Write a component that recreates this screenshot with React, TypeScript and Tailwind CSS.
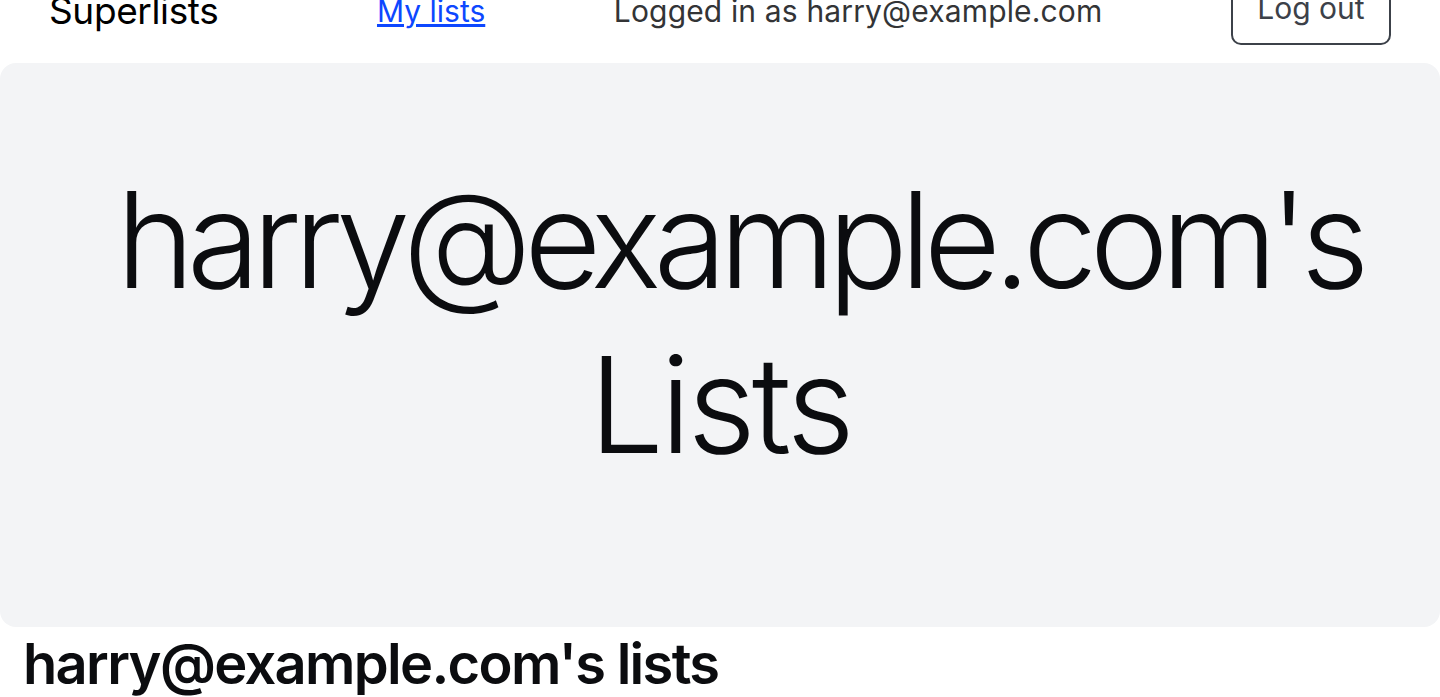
export default function App() {
  return (
    <div className="w-[1440px] h-[697px] overflow-hidden bg-white" style={{ fontFamily: "Inter, 'Noto Sans', sans-serif" }}>
      <div className="-mt-[41px]">
        <nav className="flex items-center justify-between pl-[49px] pr-[49px] h-[104px]">
          <span className="text-[37px] text-black tracking-[-0.01em]">Superlists</span>
          <a href="#" className="text-[30px] text-[#0d47ff] underline ml-[30px]">My lists</a>
          <span className="text-[30px] text-[#333436] tracking-[0.005em]">Logged in as harry@example.com</span>
          <button className="text-[30px] text-[#3c4149] border-2 border-[#3c4149] rounded-[10px] w-[160px] h-[74px] -mt-[6px]">Log out</button>
        </nav>
        <div className="bg-[#f3f4f6] rounded-[16px] h-[564px] flex flex-col justify-center pb-[46px]">
          <h1 className="text-center text-[133px] leading-[165px] font-light text-[#0b0c0f]">
            <span className="block pl-[38px] tracking-[-0.057em]">harry@example.com's</span>
            <span className="block tracking-[-0.03em]">Lists</span>
          </h1>
        </div>
        <h2 className="text-[56px] font-semibold text-[#0b0c0f] px-[23px] leading-[70px] tracking-[-0.03em] mt-[2px]">harry@example.com's lists</h2>
      </div>
    </div>
  );
}
